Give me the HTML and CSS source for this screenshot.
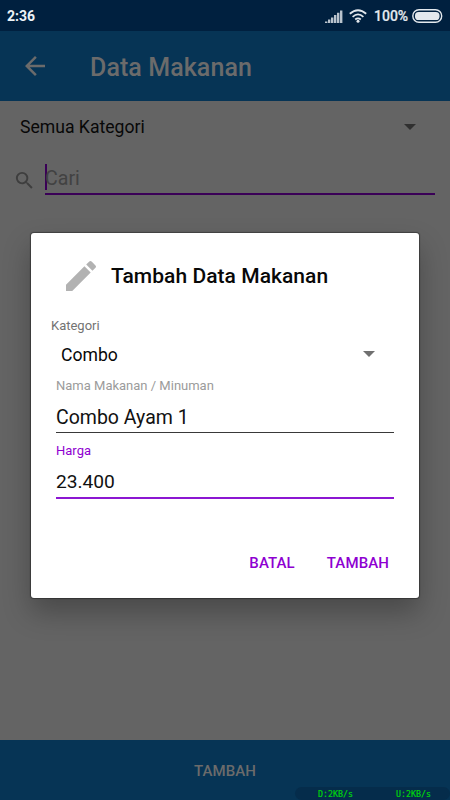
FILE: index.html
```
<!DOCTYPE html>
<html lang="id">
<head>
<meta charset="utf-8">
<title>Data Makanan</title>
<link rel="stylesheet" href="styles.css">
</head>
<body>
<div class="screen">
  <header class="status">
    <span class="clock">2:36</span>
    <svg class="signal" width="18" height="13" viewBox="0 0 18 13"><path d="M0 11.5h2.4V13H0zM3 9.5h2.4V13H3zM6 7.5h2.4V13H6zM9 5h2.4v8H9zM12 2.8h2.4V13H12zM15 0.5h2.4V13H15z"/></svg>
    <svg class="wifi" width="18" height="14" viewBox="0 0 18 14"><path d="M.8 4.8Q9-2.4 17.2 4.8M3.6 7.8Q9 3 14.4 7.8M6.2 10.5Q9 8.2 11.8 10.5"/><circle cx="9" cy="12.2" r="1.5"/></svg>
    <span class="percent">100%</span>
    <svg class="battery" width="31" height="14" viewBox="0 0 31 14"><rect class="shell" x=".8" y=".8" width="28.9" height="12.4" rx="6.2"/><rect class="charge" x="3" y="3" width="24.5" height="8" rx="3.6"/></svg>
  </header>
  <nav class="appbar">
    <svg width="30" height="30" viewBox="0 0 24 24"><path d="M20 11H7.83l5.59-5.59L12 4l-8 8 8 8 1.41-1.41L7.83 13H20v-2z"/></svg>
    <h1>Data Makanan</h1>
  </nav>
  <main class="content">
    <div class="filter"><span>Semua Kategori</span><svg width="12" height="6" viewBox="0 0 12 6"><path d="M0 0h12L6 6z"/></svg></div>
    <div class="search">
      <svg width="23" height="23" viewBox="0 0 24 24"><path d="M15.5 14h-.79l-.28-.27A6.47 6.47 0 0 0 16 9.5 6.5 6.5 0 1 0 9.5 16c1.61 0 3.09-.59 4.23-1.57l.27.28v.79l5 4.99L20.49 19l-4.99-5zm-6 0C7.01 14 5 11.99 5 9.5S7.01 5 9.5 5 14 7.01 14 9.5 11.99 14 9.5 14z"/></svg>
      <div class="query"><span>Cari</span></div>
    </div>
  </main>
  <footer class="bottom"><span>TAMBAH</span></footer>
  <div class="speed"><span>D:2KB/s</span><span>U:2KB/s</span></div>
  <section class="dialog">
    <div class="heading">
      <svg width="40" height="40" viewBox="0 0 24 24"><path d="M3 17.25V21h3.75L17.81 9.94l-3.75-3.75L3 17.25zM20.71 7.04a1 1 0 0 0 0-1.41l-2.34-2.34a1 1 0 0 0-1.41 0l-1.83 1.83 3.75 3.75 1.83-1.83z"/></svg>
      <h2>Tambah Data Makanan</h2>
    </div>
    <div class="caption">Kategori</div>
    <div class="select"><span>Combo</span><svg width="12" height="6" viewBox="0 0 12 6"><path d="M0 0h12L6 6z"/></svg></div>
    <div class="field"><label>Nama Makanan / Minuman</label><div class="value">Combo Ayam 1</div></div>
    <div class="field active"><label>Harga</label><div class="value">23.400</div></div>
    <div class="actions"><span class="cancel">BATAL</span><span class="add">TAMBAH</span></div>
  </section>
</div>
</body>
</html>
```
FILE: styles.css
```
* { box-sizing: border-box; }
body { margin: 0; font-family: Roboto, sans-serif; }
svg { display: block; flex: none; }
h1, h2 { margin: 0; font-weight: 500; white-space: nowrap; }
.screen { position: relative; width: 450px; height: 800px; overflow: hidden; display: flex; flex-direction: column; background: #646464; }
.status { height: 31px; flex: none; display: flex; align-items: center; padding: 1px 7px 0 7px; background: #00203f; color: #e4e9ee; font-size: 14px; font-weight: 500; }
.clock { margin-right: auto; font-weight: 700; color: #edf3f7; }
.signal { fill: #b9c3cd; }
.wifi { margin: 0 7px 0 6px; fill: #e4e9ee; }
.wifi path { fill: none; stroke: #e4e9ee; stroke-width: 1.8; }
.percent { width: 38px; white-space: nowrap; font-size: 14px; -webkit-text-stroke: .2px #e4e9ee; }
.battery .shell { fill: none; stroke: #e4e9ee; stroke-width: 1.4; }
.battery .charge { fill: #e4e9ee; }
.appbar { height: 70px; flex: none; display: flex; align-items: center; padding: 0 20px; background: #063455; color: #6b6b6b; }
.appbar svg { fill: #6b6b6b; }
.appbar h1 { margin: 4px 0 0 40px; font-size: 25px; line-height: 30px; letter-spacing: .08px; }
.content { flex: 1; }
.filter { height: 52px; display: flex; align-items: center; justify-content: space-between; padding: 0 34px 0 20px; color: #080808; font-size: 17.6px; }
.filter svg { fill: #303030; }
.search { display: flex; align-items: center; padding: 10px 15px 0 13px; }
.search > svg { fill: #3e3e3e; margin-right: 9px; margin-top: 2px; }
.query { flex: 1; height: 32px; border-bottom: 2px solid #3a0057; font-size: 19.6px; line-height: 29px; color: #424242; }
.query span { display: block; margin-top: 1px; height: 26px; box-shadow: inset 2px 0 #3a0057; }
.bottom { height: 60px; flex: none; display: flex; align-items: center; justify-content: center; padding-top: 1px; background: #063455; color: #6b6b6b; font-size: 15px; font-weight: 500; letter-spacing: .1px; }
.speed { position: absolute; left: 295px; top: 787px; width: 155px; height: 13px; border-radius: 7px; background: #052c4b; display: flex; gap: 43px; padding-left: 23px; color: #00d40b; font: 8.3px/14px "DejaVu Sans Mono", monospace; -webkit-text-stroke: .2px #00d40b; }
.dialog { position: absolute; left: 31px; top: 233px; width: 388px; height: 365px; border-radius: 3px; background: #fff; padding: 23px 25px 0; box-shadow: 0 0 1px 1px rgba(0,0,0,.35), 0 14px 28px rgba(0,0,0,.28); }
.heading { display: flex; align-items: center; height: 40px; padding-left: 5px; }
.heading svg { fill: #b2b2b2; }
.heading h2 { margin: 0 0 0 10px; font-size: 21px; letter-spacing: .05px; color: #080808; }
.caption { margin: 21px 0 0 -5px; font-size: 13px; line-height: 18px; color: #737373; }
.select { height: 38px; display: flex; align-items: center; justify-content: space-between; padding: 0 19px 0 5px; font-size: 17.6px; color: #080808; }
.select span { padding-top: 1px; }
.select svg { fill: #707070; }
.field label { display: block; font-size: 13px; line-height: 18px; color: #9b9b9b; }
.field { margin-top: 4px; height: 56px; border-bottom: 1px solid #393939; }
.value { margin-top: 11px; font-size: 19.5px; line-height: 24px; color: #111; }
.active { margin-top: 9px; height: 57px; border-bottom: 2px solid #8c16d2; }
.active label { color: #9000d0; }
.active .value { margin-top: 10px; font-size: 19.2px; letter-spacing: -.05px; }
.actions { display: flex; justify-content: flex-end; gap: 32px; margin-top: 54px; padding-right: 5px; color: #8e00d1; font-size: 15px; line-height: 20px; font-weight: 500; letter-spacing: .1px; }
```
